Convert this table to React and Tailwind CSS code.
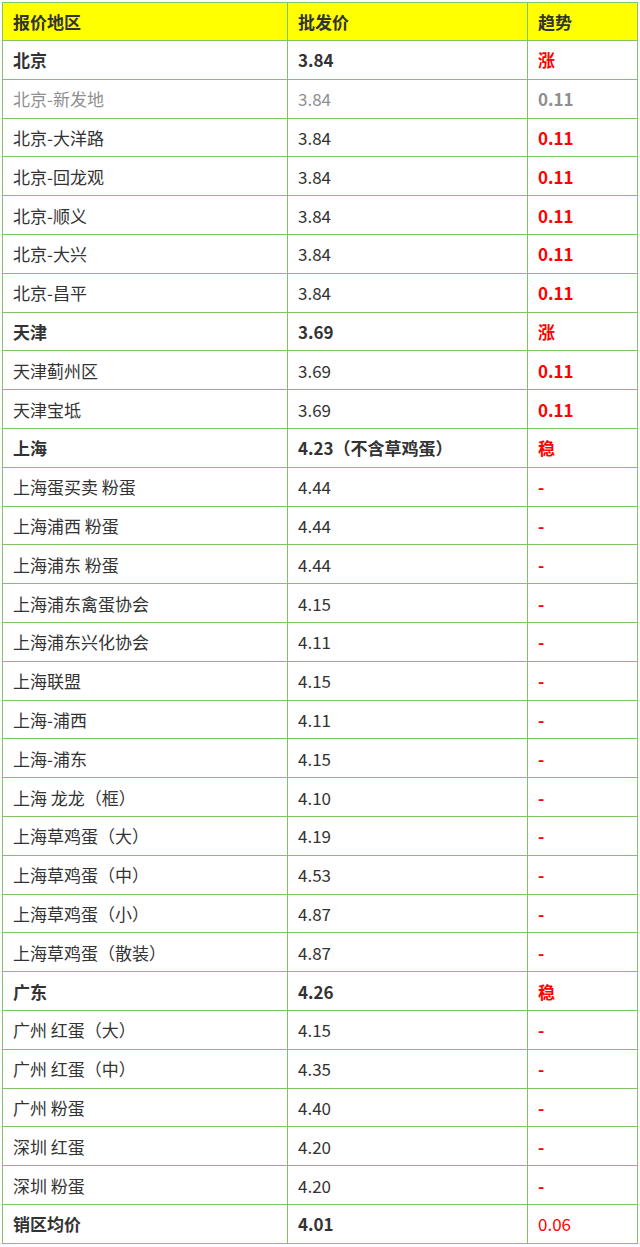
const rows = [
  { area: '北京', price: '3.84', trend: '涨', bold: true },
  { area: '北京-新发地', price: '3.84', trend: '0.11', muted: true },
  { area: '北京-大洋路', price: '3.84', trend: '0.11' },
  { area: '北京-回龙观', price: '3.84', trend: '0.11' },
  { area: '北京-顺义', price: '3.84', trend: '0.11' },
  { area: '北京-大兴', price: '3.84', trend: '0.11' },
  { area: '北京-昌平', price: '3.84', trend: '0.11' },
  { area: '天津', price: '3.69', trend: '涨', bold: true },
  { area: '天津蓟州区', price: '3.69', trend: '0.11' },
  { area: '天津宝坻', price: '3.69', trend: '0.11' },
  { area: '上海', price: '4.23（不含草鸡蛋）', trend: '稳', bold: true },
  { area: '上海蛋买卖 粉蛋', price: '4.44', trend: '-' },
  { area: '上海浦西 粉蛋', price: '4.44', trend: '-' },
  { area: '上海浦东 粉蛋', price: '4.44', trend: '-' },
  { area: '上海浦东禽蛋协会', price: '4.15', trend: '-' },
  { area: '上海浦东兴化协会', price: '4.11', trend: '-' },
  { area: '上海联盟', price: '4.15', trend: '-' },
  { area: '上海-浦西', price: '4.11', trend: '-' },
  { area: '上海-浦东', price: '4.15', trend: '-' },
  { area: '上海 龙龙（框）', price: '4.10', trend: '-' },
  { area: '上海草鸡蛋（大）', price: '4.19', trend: '-' },
  { area: '上海草鸡蛋（中）', price: '4.53', trend: '-' },
  { area: '上海草鸡蛋（小）', price: '4.87', trend: '-' },
  { area: '上海草鸡蛋（散装）', price: '4.87', trend: '-' },
  { area: '广东', price: '4.26', trend: '稳', bold: true },
  { area: '广州 红蛋（大）', price: '4.15', trend: '-' },
  { area: '广州 红蛋（中）', price: '4.35', trend: '-' },
  { area: '广州 粉蛋', price: '4.40', trend: '-' },
  { area: '深圳 红蛋', price: '4.20', trend: '-' },
  { area: '深圳 粉蛋', price: '4.20', trend: '-' },
  { area: '销区均价', price: '4.01', trend: '0.06', bold: true, thin: true },
];

export default function App() {
  return (
    <div className="bg-white w-[640px] h-[1247px] pt-[2px] pl-[2px]" style={{ fontFamily: '"Noto Sans CJK SC", "Noto Sans", sans-serif' }}>
      <table className="border-collapse w-[635px] table-fixed text-[17px] text-[#333]">
        <colgroup>
          <col className="w-[285px]" />
          <col className="w-[240px]" />
          <col className="w-[110px]" />
        </colgroup>
        <thead>
          <tr className="bg-[#ffff00] h-[38px]">
            <th className="border border-[#80c46a] text-left font-bold pl-[10px] pt-[1px]">报价地区</th>
            <th className="border border-[#80c46a] text-left font-bold pl-[10px] pt-[1px]">批发价</th>
            <th className="border border-[#80c46a] text-left font-bold pl-[10px] pt-[1px]">趋势</th>
          </tr>
        </thead>
        <tbody>
          {rows.map((r, i) => (
            <tr key={i} className="h-[38.8px]">
              <td className={`border border-[#80c46a] pl-[10px] leading-none ${r.bold ? 'font-bold' : ''} ${r.muted ? 'text-[#8f8f8f]' : ''}`}>{r.area}</td>
              <td className={`border border-[#80c46a] pl-[10px] leading-none ${r.bold ? 'font-bold' : ''} ${r.muted ? 'text-[#8f8f8f]' : ''}`}>{r.price}</td>
              <td className={`border border-[#80c46a] pl-[10px] leading-none ${r.muted ? 'text-[#8f8f8f] font-bold' : r.thin ? 'text-[#ff0000]' : 'text-[#ff0000] font-bold'}`}>{r.trend}</td>
            </tr>
          ))}
        </tbody>
      </table>
    </div>
  );
}
